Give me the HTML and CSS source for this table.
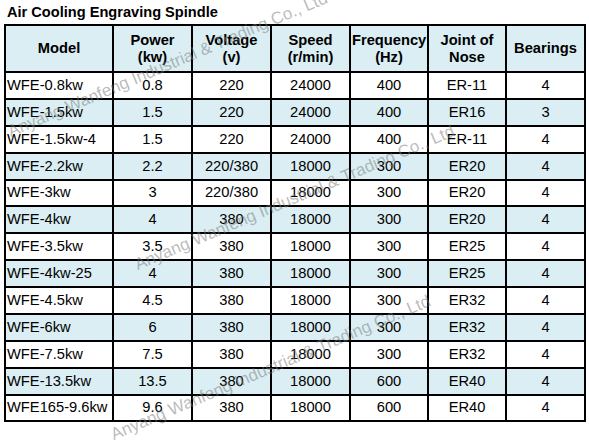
FILE: index.html
```html
<!DOCTYPE html>
<html lang="en">
<head>
    <meta charset="UTF-8">
    <title>Air Cooling Engraving Spindle</title>
    <link rel="stylesheet" href="styles.css">
</head>
<body>
<div class="page">
    <h1 class="title">Air Cooling Engraving Spindle</h1>
    <table class="spec">
        <colgroup>
            <col class="c-model">
            <col class="c-num">
            <col class="c-num">
            <col class="c-num">
            <col class="c-freq">
            <col class="c-freq">
            <col class="c-num">
        </colgroup>
        <thead>
        <tr>
            <th>Model</th>
            <th>Power<br>(kw)</th>
            <th>Voltage<br>(v)</th>
            <th>Speed<br>(r/min)</th>
            <th>Frequency<br>(Hz)</th>
            <th>Joint of<br>Nose</th>
            <th>Bearings</th>
        </tr>
        </thead>
        <tbody>
        <tr><td>WFE-0.8kw</td><td>0.8</td><td>220</td><td>24000</td><td>400</td><td>ER-11</td><td>4</td></tr>
        <tr class="blue"><td>WFE-1.5kw</td><td>1.5</td><td>220</td><td>24000</td><td>400</td><td>ER16</td><td>3</td></tr>
        <tr><td>WFE-1.5kw-4</td><td>1.5</td><td>220</td><td>24000</td><td>400</td><td>ER-11</td><td>4</td></tr>
        <tr class="blue"><td>WFE-2.2kw</td><td>2.2</td><td>220/380</td><td>18000</td><td>300</td><td>ER20</td><td>4</td></tr>
        <tr><td>WFE-3kw</td><td>3</td><td>220/380</td><td>18000</td><td>300</td><td>ER20</td><td>4</td></tr>
        <tr class="blue"><td>WFE-4kw</td><td>4</td><td>380</td><td>18000</td><td>300</td><td>ER20</td><td>4</td></tr>
        <tr><td>WFE-3.5kw</td><td>3.5</td><td>380</td><td>18000</td><td>300</td><td>ER25</td><td>4</td></tr>
        <tr class="blue"><td>WFE-4kw-25</td><td>4</td><td>380</td><td>18000</td><td>300</td><td>ER25</td><td>4</td></tr>
        <tr><td>WFE-4.5kw</td><td>4.5</td><td>380</td><td>18000</td><td>300</td><td>ER32</td><td>4</td></tr>
        <tr class="blue"><td>WFE-6kw</td><td>6</td><td>380</td><td>18000</td><td>300</td><td>ER32</td><td>4</td></tr>
        <tr><td>WFE-7.5kw</td><td>7.5</td><td>380</td><td>18000</td><td>300</td><td>ER32</td><td>4</td></tr>
        <tr class="blue"><td>WFE-13.5kw</td><td>13.5</td><td>380</td><td>18000</td><td>600</td><td>ER40</td><td>4</td></tr>
        <tr><td>WFE165-9.6kw</td><td>9.6</td><td>380</td><td>18000</td><td>600</td><td>ER40</td><td>4</td></tr>
        </tbody>
    </table>
    <!-- watermark over the table -->
    <div class="mark mark-1">Anyang Wanfeng Industrial &amp; Trading Co., Ltd</div>
    <div class="mark mark-2">Anyang Wanfeng Industrial &amp; Trading Co., Ltd</div>
    <div class="mark mark-3">Anyang Wanfeng Industrial &amp; Trading Co., Ltd</div>
</div>
</body>
</html>
```

FILE: styles.css
```css
*{
    margin: 0;
    padding: 0;
}
body{
    background-color: #fff;
    font-family: "Liberation Sans", Arial, sans-serif;
    color: #000;
}
.page{
    position: relative;
    width: 589px;
    height: 442px;
    overflow: hidden;
}
.title{
    font-size: 14.6px;
    font-weight: bold;
    line-height: 17px;
    padding: 4px 0 0 7px;
    height: 20px;
}
.spec{
    border-collapse: collapse;
    table-layout: fixed;
    width: 581px;
    margin-left: 4px;
    font-size: 14.7px;
}
.c-model{ width: 108px; }
.c-num{ width: 79px; }
.c-freq{ width: 78px; }
.spec th,
.spec td{
    border: 2px solid #000;
    padding: 0 1px;
    text-align: center;
    vertical-align: middle;
    white-space: nowrap;
}
.spec th{
    background-color: #daeef3;
    font-weight: bold;
    line-height: 17px;
    height: 45px;
}
.spec td{
    height: 24.88px;
    line-height: 17px;
}
.spec td:first-child{
    text-align: left;
    padding-left: 1px;
}
.spec tr.blue td{
    background-color: #daeef3;
}
.mark{
    position: absolute;
    font-size: 17px;
    line-height: 16px;
    white-space: nowrap;
    color: rgba(120, 120, 120, 0.5);
    transform-origin: 0 100%;
    transform: rotate(-23deg);
}
.mark-1{ left: 12px; top: 124px; }
.mark-2{ left: 139px; top: 257px; }
.mark-3{ left: 115px; top: 427px; }
```
